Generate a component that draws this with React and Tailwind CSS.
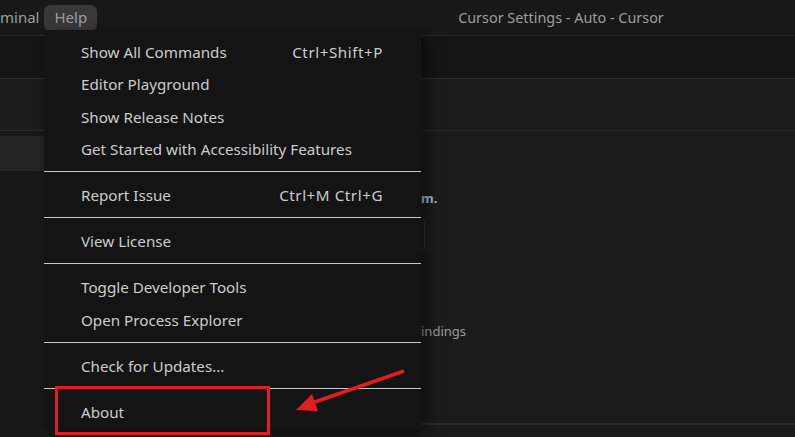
const menu = [
  [
    { label: "Show All Commands", keys: "Ctrl+Shift+P" },
    { label: "Editor Playground" },
    { label: "Show Release Notes" },
    { label: "Get Started with Accessibility Features" },
  ],
  [{ label: "Report Issue", keys: "Ctrl+M Ctrl+G" }],
  [{ label: "View License" }],
  [{ label: "Toggle Developer Tools" }, { label: "Open Process Explorer" }],
  [{ label: "Check for Updates..." }],
  [{ label: "About" }],
];

export default function App() {
  return (
    <div
      className="relative h-[437px] w-[795px] overflow-hidden bg-[#1b1b1b] text-[#cccccc]"
      style={{ fontFamily: '"Noto Sans", "Open Sans", sans-serif' }}
    >
      {/* title bar */}
      <div className="flex h-[36px] items-center border-b border-[#2b2b2b] bg-[#181818] text-[15px]">
        <span className="text-[#9d9d9d]">minal</span>
        <span className="ml-[5px] flex h-[26px] items-center rounded-md bg-[#383838] px-[10px] text-[#9d9d9d]">Help</span>
        <span className="ml-[361px] text-[14.4px] text-[#9d9d9d]">Cursor Settings - Auto - Cursor</span>
      </div>
      {/* tabs row */}
      <div className="h-[43px] border-b border-[#2b2b2b] bg-[#141414]" />
      {/* header row */}
      <div className="h-[52px] border-b border-[#2b2b2b] bg-[#1b1b1b]" />
      {/* body */}
      <div className="flex h-[305px]">
        <div className="w-[421px] shrink-0 bg-[#181818] pt-[5px]">
          <div className="h-[35px] bg-[#252525]" />
        </div>
        <div className="flex flex-1 flex-col">
          <div className="mt-[58px] h-[18px] text-[13px] font-bold leading-[18px] text-[#a9b6c9]">m.</div>
          <div className="-ml-[200px] mt-[12px] h-[32px] w-[204px] rounded-[3px] border border-[#2e2e2e]" />
          <div className="mt-[71px] text-[13px] text-[#9d9d9d]">indings</div>
          <div className="mt-auto mb-[11px] h-[2px] bg-[#2b2b2b]" />
        </div>
      </div>

      {/* Help menu */}
      <div className="absolute left-[44px] top-[30px] w-[377px] bg-[#141414] pt-[6px] shadow-[6px_4px_14px_rgba(0,0,0,0.45)]">
        {menu.map((group, gi) => (
          <div key={gi}>
            {gi > 0 && <div className="mb-[7.5px] mt-[5px] h-px bg-[#c8c8c8]" />}
            {group.map((item) => (
              <div key={item.label} className="flex h-[32.5px] items-center justify-between pl-[37px] pr-[38px] text-[15.2px]">
                <span>{item.label}</span>
                {item.keys && <span className="tracking-[0.55px]">{item.keys}</span>}
              </div>
            ))}
          </div>
        ))}
      </div>

      {/* annotation */}
      <div className="absolute left-[55px] top-[386px] h-[49px] w-[215px] border-[3px] border-[#e21d1d]" />
      <svg className="absolute left-0 top-0" width="795" height="437">
        <line x1="404" y1="371" x2="312" y2="403" stroke="#e21d1d" strokeWidth="3.5" />
        <polygon points="296,410 312,394 318,411" fill="#e21d1d" />
      </svg>
    </div>
  );
}
